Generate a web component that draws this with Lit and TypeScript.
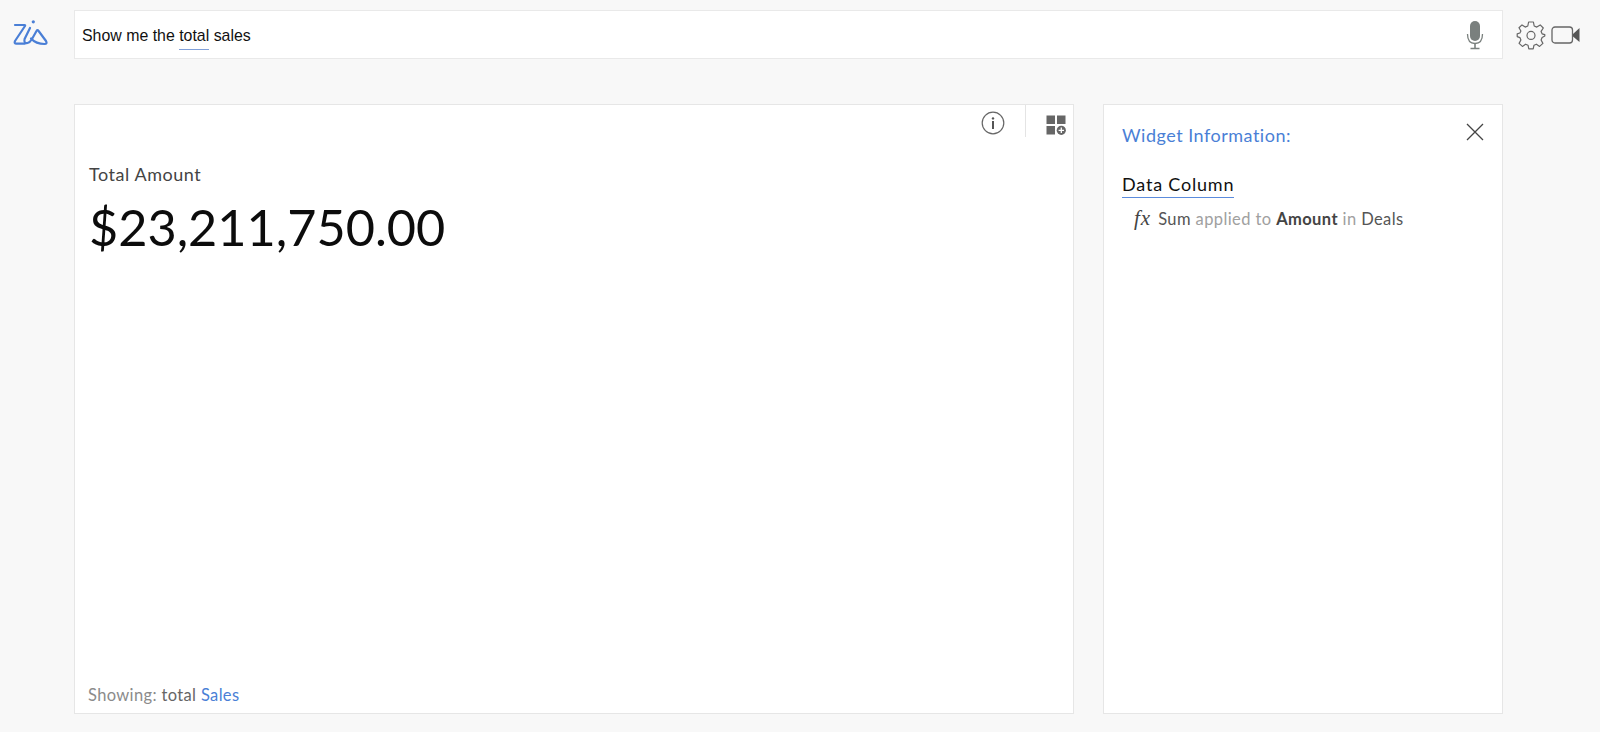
import { LitElement, html, css } from "lit";
import { customElement } from "lit/decorators.js";

@customElement("app-root")
export class AppRoot extends LitElement {
  static styles = css`
    :host { display: block; width: 1600px; height: 732px; background: #f8f8f8; font-family: "Lato", sans-serif; overflow: hidden; }
    .page { display: grid; grid-template-columns: 74px 1429px 1fr; grid-template-rows: 49px 45px 610px; padding-top: 10px; }
    .logo { display: flex; justify-content: flex-start; padding-left: 13px; align-items: flex-start; padding-top: 10px; }
    .search { display: flex; align-items: center; justify-content: space-between; background: #fff; border: 1px solid #e9e9e9; box-sizing: border-box; padding: 2px 17px 0 7px; font: 15.9px "Liberation Sans", sans-serif; color: #111; }
    .search svg { margin-top: -2px; }
    .q { position: relative; display: inline-block; }
    .q::after { content: ""; position: absolute; left: 0; right: 0; bottom: -5px; height: 1px; background: #7f9fd8; }
    .tools { display: flex; align-items: center; padding: 0 0 0 13px; gap: 5px; height: 49px; }
    .row { grid-column: 2; grid-row: 3; display: flex; gap: 29px; width: 1429px; }
    .main { width: 1000px; box-sizing: border-box; background: #fff; border: 1px solid #e6e6e6; display: flex; flex-direction: column; position: relative; }
    .bar { display: flex; justify-content: flex-end; height: 31px; padding-right: 7px; }
    .bar .i { display: flex; align-items: center; padding: 4px 20px 0 0; height: 28px; border-right: 1px solid #e4e4e4; }
    .bar .g { display: flex; align-items: center; padding: 6px 0 0 20px; height: 27px; }
    .body { flex: 1; padding: 27px 14px 0; }
    .label { font-size: 18px; letter-spacing: 0.55px; color: #444; line-height: 22px; }
    .value { font-size: 50.4px; line-height: 60px; color: #0c0c0c; margin-top: 12px; }
    .foot { font-size: 16.5px; letter-spacing: 0.35px; padding: 0 13px 8px; color: #8b8b8b; line-height: 20px; }
    .foot .t { color: #666; }
    .foot .s { color: #4a7fd6; }
    .side { width: 400px; box-sizing: border-box; background: #fff; border: 1px solid #e6e6e6; padding: 19px 17px 0 18px; }
    .head { display: flex; justify-content: space-between; align-items: flex-start; }
    .head svg { margin-top: -1px; }
    .title { font-size: 18px; letter-spacing: 0.5px; line-height: 22px; color: #4a7fd6; }
    .dc { display: inline-block; margin-top: 26px; font-size: 18px; letter-spacing: 0.8px; line-height: 25px; color: #111; border-bottom: 1px solid #5b8bdc; }
    .fx-row { display: flex; align-items: center; gap: 7px; margin: 8px 0 0 12px; font-size: 16.5px; letter-spacing: 0.4px; color: #a0a0a0; line-height: 20px; }
    .fx { font: italic 21px "Liberation Serif", serif; color: #444; letter-spacing: 1px; }
    .d { color: #555; }
    .b { color: #444; font-weight: 700; }
    .txt { white-space: pre; }
    svg { display: block; }
  `;

  render() {
    return html`
      <div class="page">
        <div class="logo">
          <svg width="36" height="27" viewBox="0 0 36 27" fill="none" stroke="#4a7fd6" stroke-width="2.2" stroke-linecap="round" stroke-linejoin="round">
            <path d="M2 5 H11.5 Q12.5 5 12 6 L2 21 Q0.8 23.6 3.5 23.6 H12" />
            <path d="M17 8 L11.6 19 Q10.5 23.6 14.5 23 Q17 22.4 19 19 L23.5 11 Q24.5 9.4 25.6 11 L33 21 Q34.6 24 31.5 24 Q23 24 18 18.5" />
            <circle cx="20.3" cy="1.8" r="1.6" fill="#4a7fd6" stroke="none" />
          </svg>
        </div>
        <div class="search">
          <span>Show me the <span class="q">total</span> sales</span>
          <svg width="20" height="30" viewBox="0 0 20 30" fill="none">
            <rect x="5" y="1" width="10" height="20" rx="5" fill="#7a807e" />
            <path d="M2.5 14 Q2.5 23.5 10 23.5 Q17.5 23.5 17.5 14" stroke="#7a807e" stroke-width="1.3" />
            <path d="M10 23.5 V28 M5.5 28.5 H14.5" stroke="#7a807e" stroke-width="1.6" />
          </svg>
        </div>
        <div class="tools">
          <svg width="30" height="30" viewBox="0 0 30 30" fill="none" stroke="#666" stroke-width="1.2" stroke-linejoin="round">
            <path d="M12.6 2 H17.4 L18.2 6 L20.8 7.1 L24.2 4.9 L27.3 8 L25.1 11.4 L26.1 13.8 L28.8 14.6 V16 L26.1 17.6 L25.1 20 L26.9 23.4 L23.6 26.4 L20.4 24.2 L18 25.2 L17.2 28.8 H12.8 L12 25.2 L9.6 24.2 L6.4 26.4 L3.1 23.4 L4.9 20 L3.9 17.6 L1.2 16.6 V13.8 L3.9 13 L4.9 11 L3 7.8 L6 4.9 L9.2 7.1 L11.8 6 Z" />
            <circle cx="15" cy="15.4" r="4" />
          </svg>
          <svg width="30" height="20" viewBox="0 0 30 20" fill="none">
            <rect x="1" y="2" width="20.5" height="16" rx="3" stroke="#666" stroke-width="1.3" />
            <path d="M22 9 L28.5 3 V17 L22 11.5 Z" fill="#555" />
          </svg>
        </div>
        <div class="row">
          <div class="main">
            <div class="bar">
              <div class="i">
                <svg width="24" height="24" viewBox="0 0 24 24" fill="none">
                  <circle cx="12" cy="12" r="10.8" stroke="#666" stroke-width="1.2" />
                  <circle cx="12" cy="7.4" r="1.2" fill="#555" />
                  <rect x="11" y="10" width="2" height="8" fill="#555" />
                </svg>
              </div>
              <div class="g">
                <svg width="20" height="20" viewBox="0 0 20 20">
                  <rect x="0.5" y="0.5" width="8.5" height="8.5" fill="#666" />
                  <rect x="11" y="0.5" width="8.5" height="8.5" fill="#666" />
                  <rect x="0.5" y="11" width="8.5" height="8.5" fill="#666" />
                  <circle cx="15.3" cy="15.3" r="4.6" fill="#666" />
                  <path d="M15.3 12.6 V18 M12.6 15.3 H18" stroke="#fff" stroke-width="1.3" />
                </svg>
              </div>
            </div>
            <div class="body">
              <div class="label">Total Amount</div>
              <div class="value">$23,211,750.00</div>
            </div>
            <div class="foot">Showing: <span class="t">total</span> <span class="s">Sales</span></div>
          </div>
          <div class="side">
            <div class="head">
              <div class="title">Widget Information:</div>
              <svg width="20" height="20" viewBox="0 0 20 20" fill="none" stroke="#444" stroke-width="1.3"><path d="M2 1 L18 17 M18 1 L2 17" /></svg>
            </div>
            <div class="dc">Data Column</div>
            <div class="fx-row">
              <span class="fx">fx</span>
              <span class="txt"><span class="d">Sum</span> applied to <span class="b">Amount</span> in <span class="d">Deals</span></span>
            </div>
          </div>
        </div>
      </div>
    `;
  }
}
